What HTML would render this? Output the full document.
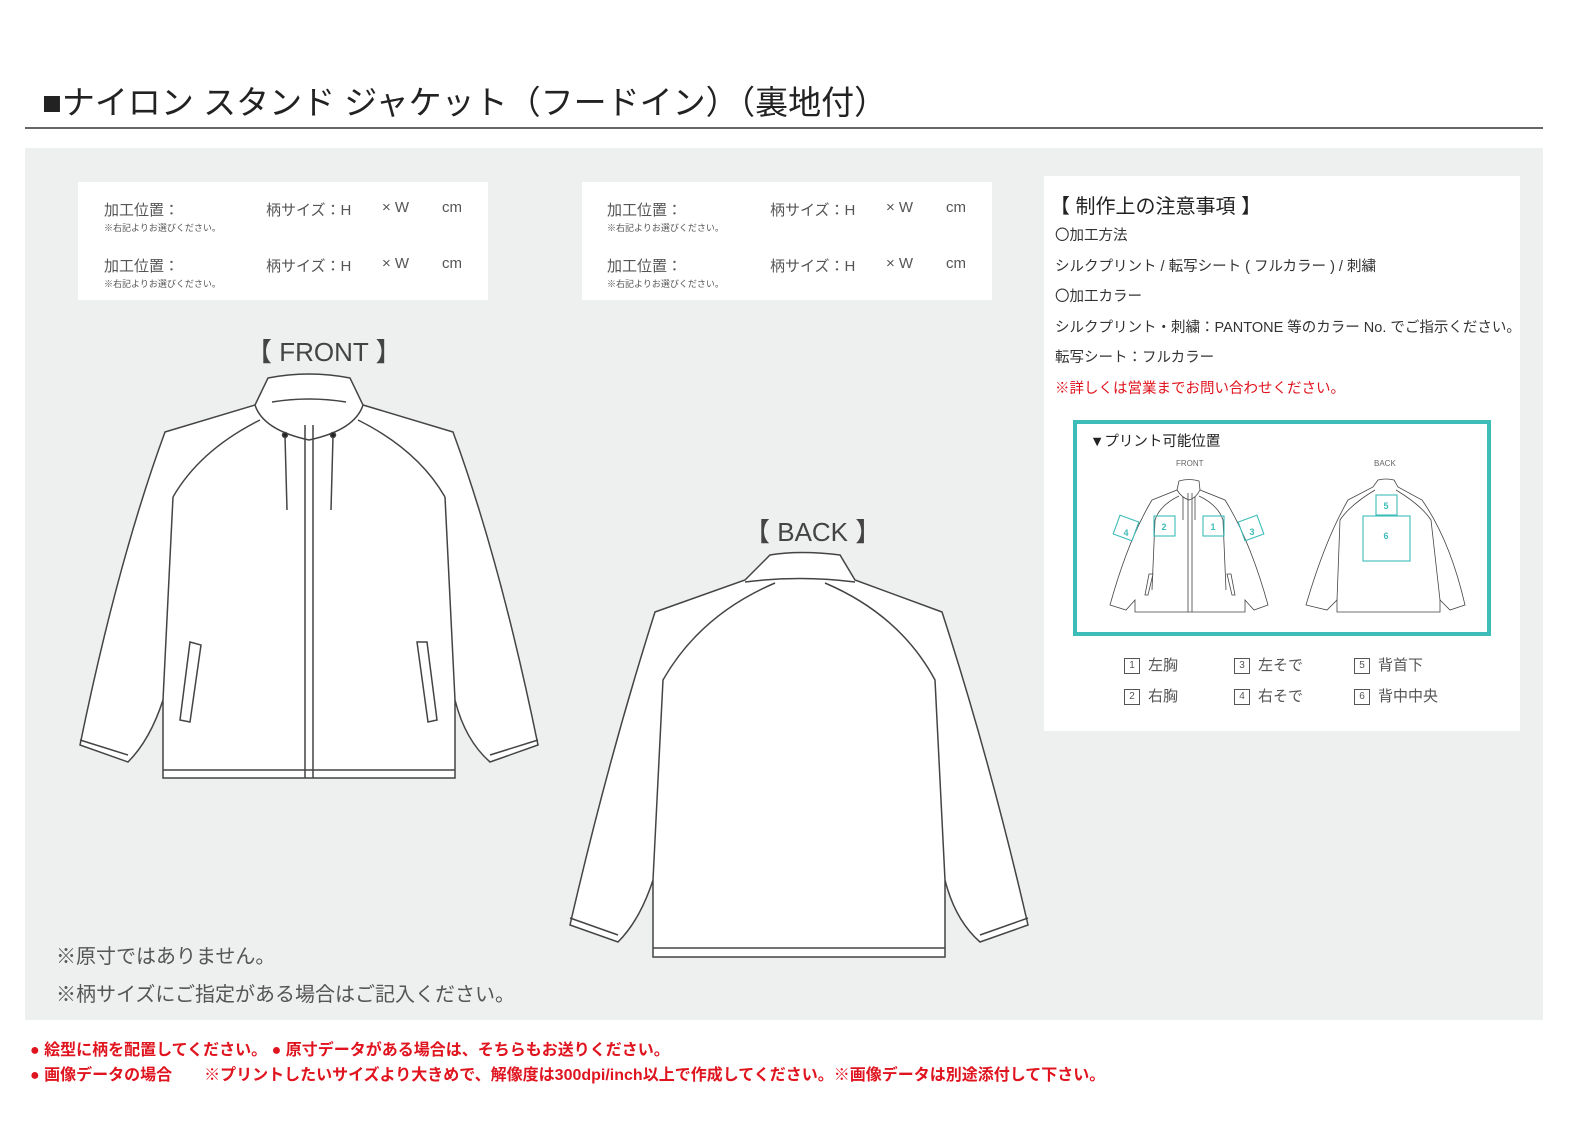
<!DOCTYPE html>
<html><head><meta charset="utf-8"><style>
*{margin:0;padding:0;box-sizing:border-box}
body{width:1587px;height:1122px;background:#fff;font-family:"Liberation Sans","Noto Sans CJK JP",sans-serif;position:relative;overflow:hidden;color:#333}
.abs{position:absolute}
.title{left:42px;top:76px;font-size:33px;color:#222}
.rule{left:25px;top:127px;width:1518px;height:2px;background:#666}
.gray{left:25px;top:148px;width:1518px;height:872px;background:#eeefef}
.box{background:#fff}
.lbl{font-size:15px;color:#555}
.sm{font-size:9px;color:#555}
.red{color:#e0141e}
.teal{border:4px solid #3dbcb8}
.leg{font-size:15px;color:#555}
.num{display:inline-block;width:16px;height:16px;border:1px solid #555;font-size:10px;text-align:center;line-height:14px;margin-right:8px;vertical-align:middle}
</style></head><body>
<div class="abs title">■ナイロン スタンド ジャケット（フードイン）（裏地付）</div>
<div class="abs rule"></div>
<div class="abs gray"></div>

<div class="abs box" style="left:78px;top:182px;width:410px;height:118px"></div>
<div class="abs box" style="left:582px;top:182px;width:410px;height:118px"></div>
<div class="abs box" style="left:1044px;top:176px;width:476px;height:555px"></div>

<div class="abs lbl" style="left:104px;top:199px">加工位置：</div>
<div class="abs sm" style="left:104px;top:221px">※右記よりお選びください。</div>
<div class="abs lbl" style="left:266px;top:199px">柄サイズ：H</div>
<div class="abs lbl" style="left:382px;top:199px">× W</div>
<div class="abs lbl" style="left:442px;top:199px">cm</div>
<div class="abs lbl" style="left:104px;top:255px">加工位置：</div>
<div class="abs sm" style="left:104px;top:277px">※右記よりお選びください。</div>
<div class="abs lbl" style="left:266px;top:255px">柄サイズ：H</div>
<div class="abs lbl" style="left:382px;top:255px">× W</div>
<div class="abs lbl" style="left:442px;top:255px">cm</div>

<div class="abs lbl" style="left:607px;top:199px">加工位置：</div>
<div class="abs sm" style="left:607px;top:221px">※右記よりお選びください。</div>
<div class="abs lbl" style="left:770px;top:199px">柄サイズ：H</div>
<div class="abs lbl" style="left:886px;top:199px">× W</div>
<div class="abs lbl" style="left:946px;top:199px">cm</div>
<div class="abs lbl" style="left:607px;top:255px">加工位置：</div>
<div class="abs sm" style="left:607px;top:277px">※右記よりお選びください。</div>
<div class="abs lbl" style="left:770px;top:255px">柄サイズ：H</div>
<div class="abs lbl" style="left:886px;top:255px">× W</div>
<div class="abs lbl" style="left:946px;top:255px">cm</div>

<div class="abs" style="left:246px;top:332px;font-size:26px;color:#444">【 FRONT 】</div>
<div class="abs" style="left:744px;top:512px;font-size:26px;color:#444">【 BACK 】</div>

<svg class="abs" style="left:0;top:0" width="1587" height="1122" fill="#fff" stroke="#444" stroke-width="1.5">
<path d="M165,432 L255,405 L309,438 L363,405 L453,432 Q500,560 538,745 L490,762 Q465,740 455,700 L455,778 L163,778 L163,700 Q150,740 128,762 L80,745 Q118,560 165,432 Z"/>
<path d="M255,405 L268,378 Q309,370 350,378 L363,405 Q355,430 309,440 Q263,430 255,405 Z"/>
<path d="M272,402 Q309,396 346,402" fill="none"/>
<path d="M260,420 Q200,450 173,497" fill="none"/><path d="M358,420 Q418,450 445,497" fill="none"/>
<path d="M173,497 L163,700" fill="none"/><path d="M445,497 L455,700" fill="none"/>
<path d="M305,425 L305,778 M313,425 L313,778" fill="none"/>
<path d="M163,770 L455,770" fill="none"/>
<path d="M285,436 L287,510 M333,436 L331,510" fill="none"/>
<circle cx="285" cy="435" r="2.5" fill="#222"/><circle cx="333" cy="435" r="2.5" fill="#222"/>
<path d="M190,642 L201,645 L190,722 L180,720 Z"/><path d="M417,642 L427,642 L437,720 L428,722 Z"/>
<path d="M80,740 L128,755 M538,740 L490,755" fill="none"/>
<path d="M655,612 L745,580 L770,555 Q800,550 840,555 L855,580 L942,612 Q990,760 1028,925 L980,942 Q955,920 945,880 L945,957 L653,957 L653,880 Q640,920 618,942 L570,925 Q608,760 655,612 Z"/>
<path d="M745,582 Q800,575 855,582" fill="none"/>
<path d="M775,583 Q700,615 663,680 L653,880" fill="none"/><path d="M825,583 Q900,615 935,680 L945,880" fill="none"/>
<path d="M653,948 L945,948" fill="none"/>
<path d="M570,918 L618,935 M1028,918 L980,935" fill="none"/>
</svg>

<div class="abs" style="left:56px;top:938px;font-size:20px;color:#555;line-height:38px">※原寸ではありません。<br>※柄サイズにご指定がある場合はご記入ください。</div>

<div class="abs" style="left:1050px;top:190px;font-size:20px;color:#222">【 制作上の注意事項 】</div>
<div class="abs" style="left:1055px;top:221px;font-size:14.5px;color:#333;line-height:30.6px">〇加工方法<br>シルクプリント / 転写シート ( フルカラー ) / 刺繍<br>〇加工カラー<br>シルクプリント・刺繍：PANTONE 等のカラー No. でご指示ください。<br>転写シート：フルカラー<br><span class="red">※詳しくは営業までお問い合わせください。</span></div>

<div class="abs teal" style="left:1073px;top:420px;width:418px;height:216px"></div>
<div class="abs" style="left:1090px;top:430px;font-size:14.5px;color:#222">▼プリント可能位置</div>
<div class="abs" style="left:1176px;top:459px;font-size:8px;color:#666">FRONT</div>
<div class="abs" style="left:1374px;top:459px;font-size:8px;color:#666">BACK</div>
<svg class="abs" style="left:0;top:0" width="1587" height="1122" fill="#fff" stroke="#444" stroke-width="0.8">
<path d="M1152,500 L1177,490 L1189,500 L1200,490 L1225,500 Q1250,540 1268,605 L1254,610 L1245,600 L1245,612 L1135,612 L1135,600 L1126,610 L1110,605 Q1128,540 1152,500 Z"/>
<path d="M1177,490 L1179,481 Q1189,478 1199,481 L1200,490 Q1196,498 1189,500 Q1182,498 1177,490Z"/>
<path d="M1179,496 Q1160,505 1155,520 L1152,590 M1199,496 Q1218,505 1223,520 L1226,590" fill="none"/>
<path d="M1188,493 L1188,612 M1192,493 L1192,612" fill="none"/>
<path d="M1183,497 L1183,520 M1195,497 L1195,520" fill="none"/>
<path d="M1149,574 L1153,574 L1148,595 L1145,595 Z"/><path d="M1227,574 L1231,574 L1235,595 L1232,595 Z"/>
<path d="M1348,500 L1373,487 L1378,480 Q1386,478 1394,480 L1398,487 L1422,500 Q1450,540 1465,605 L1450,610 L1440,600 L1440,612 L1337,612 L1337,600 L1327,610 L1306,605 Q1325,540 1348,500 Z"/>
<path d="M1375,490 Q1350,505 1340,520 L1337,600 M1396,490 Q1421,505 1431,520 L1440,600" fill="none"/>
<g stroke="#3dbcb8" fill="none" stroke-width="1.1">
<rect x="1154" y="516" width="21" height="20"/><rect x="1203" y="516" width="21" height="20"/>
<rect x="1116" y="518" width="20" height="20" transform="rotate(20 1126 528)"/>
<rect x="1241" y="518" width="20" height="20" transform="rotate(-20 1251 528)"/>
<rect x="1376" y="495" width="21" height="20"/><rect x="1363" y="516" width="47" height="45"/>
</g>
<g fill="#3dbcb8" stroke="none" font-size="9" font-family="Liberation Sans" text-anchor="middle" font-weight="bold">
<text x="1164" y="530">2</text><text x="1213" y="530">1</text><text x="1126" y="536">4</text><text x="1252" y="535">3</text><text x="1386" y="509">5</text><text x="1386" y="539">6</text>
</g>
</svg>
<div class="abs leg" style="left:1124px;top:650px;line-height:31px"><span class="num">1</span>左胸<br><span class="num">2</span>右胸</div>
<div class="abs leg" style="left:1234px;top:650px;line-height:31px"><span class="num">3</span>左そで<br><span class="num">4</span>右そで</div>
<div class="abs leg" style="left:1354px;top:650px;line-height:31px"><span class="num">5</span>背首下<br><span class="num">6</span>背中中央</div>

<div class="abs red" style="left:30px;top:1038px;font-size:16px;line-height:25px;font-weight:bold">● 絵型に柄を配置してください。 ● 原寸データがある場合は、そちらもお送りください。<br>● 画像データの場合　　※プリントしたいサイズより大きめで、解像度は300dpi/inch以上で作成してください。※画像データは別途添付して下さい。</div>
</body></html>
